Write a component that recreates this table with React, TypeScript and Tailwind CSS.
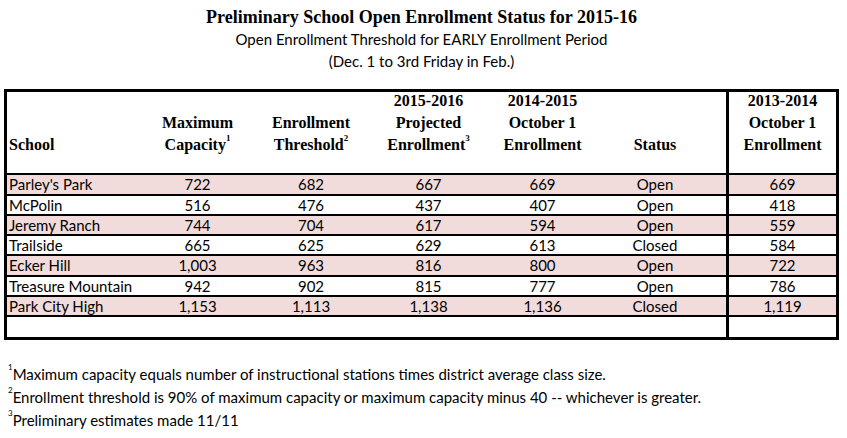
import React from "react";

const rows = [
  ["Parley's Park", "722", "682", "667", "669", "Open", "669"],
  ["McPolin", "516", "476", "437", "407", "Open", "418"],
  ["Jeremy Ranch", "744", "704", "617", "594", "Open", "559"],
  ["Trailside", "665", "625", "629", "613", "Closed", "584"],
  ["Ecker Hill", "1,003", "963", "816", "800", "Open", "722"],
  ["Treasure Mountain", "942", "902", "815", "777", "Open", "786"],
  ["Park City High", "1,153", "1,113", "1,138", "1,136", "Closed", "1,119"],
  ["", "", "", "", "", "", ""],
];

const heights = ["h-[21px]", "h-[20px]", "h-[20px]", "h-[20px]", "h-[21px]", "h-[20px]", "h-[20px]", "h-[20px]"];

const serif = "font-['Liberation_Serif',serif]";
const sans = "font-['Lato',sans-serif]";

function Sup({ n }: { n: string }) {
  return <sup className="relative -top-[3px] text-[9px] align-super leading-none">{n}</sup>;
}

function FSup({ n }: { n: string }) {
  return <sup className="relative -top-[4px] text-[8px] align-super leading-none">{n}</sup>;
}

export default function App() {
  return (
    <div className="w-[847px] h-[438px] bg-white text-black relative overflow-hidden">
      <div className="w-[835px] ml-[4px] flex flex-col items-center">
        <div className={`${serif} font-bold text-[18px] leading-[22px] mt-[6px]`}>
          Preliminary School Open Enrollment Status for 2015-16
        </div>
        <div className={`${sans} text-[15px] leading-[22px]`}>
          Open Enrollment Threshold for EARLY Enrollment Period
        </div>
        <div className={`${sans} text-[15px] leading-[22px]`}>(Dec. 1 to 3rd Friday in Feb.)</div>
      </div>

      <div className="ml-[4px] mt-[17px] w-[835px] border-[3px] border-black flex">
        <div className="w-[719px] flex flex-col">
          <div className={`${serif} font-bold text-[16px] h-[83px] border-b-2 border-black flex items-end pb-[17px]`}>
            <div className="w-[133px] pl-[2px] leading-[22px]">School</div>
            <div className="w-[115px] text-center leading-[22px]">
              <div>Maximum</div>
              <div>Capacity<Sup n="1" /></div>
            </div>
            <div className="w-[112px] text-center leading-[22px]">
              <div>Enrollment</div>
              <div>Threshold<Sup n="2" /></div>
            </div>
            <div className="w-[123px] text-center leading-[22px]">
              <div>2015-2016</div>
              <div>Projected</div>
              <div>Enrollment<Sup n="3" /></div>
            </div>
            <div className="w-[105px] text-center leading-[22px]">
              <div>2014-2015</div>
              <div>October 1</div>
              <div>Enrollment</div>
            </div>
            <div className="w-[120px] text-center leading-[22px]">Status</div>
            <div className="w-[11px]" />
          </div>
          {rows.map((r, i) => (
            <div
              key={i}
              className={`${sans} text-[15px] flex items-center ${heights[i]} ${i < 7 ? "border-b-2 border-black" : ""} ${i % 2 === 0 && i < 7 ? "bg-[#f2dcdb]" : "bg-white"}`}
            >
              <div className="w-[133px] pl-[2px] leading-none">{r[0]}</div>
              <div className="w-[115px] text-center leading-none">{r[1]}</div>
              <div className="w-[112px] text-center leading-none">{r[2]}</div>
              <div className="w-[123px] text-center leading-none">{r[3]}</div>
              <div className="w-[105px] text-center leading-none">{r[4]}</div>
              <div className="w-[120px] text-center leading-none">{r[5]}</div>
              <div className="w-[11px]" />
            </div>
          ))}
        </div>
        <div className="w-[110px] border-l-[3px] border-black flex flex-col">
          <div className={`${serif} font-bold text-[16px] h-[83px] border-b-2 border-black flex flex-col items-center justify-end pb-[17px] leading-[22px]`}>
            <div>2013-2014</div>
            <div>October 1</div>
            <div>Enrollment</div>
          </div>
          {rows.map((r, i) => (
            <div
              key={i}
              className={`${sans} text-[15px] flex items-center justify-center ${heights[i]} leading-none ${i < 7 ? "border-b-2 border-black" : ""} ${i % 2 === 0 && i < 7 ? "bg-[#f2dcdb]" : "bg-white"}`}
            >
              {r[6]}
            </div>
          ))}
        </div>
      </div>

      <div className={`${sans} text-[15px] leading-[23px] mt-[23px] ml-[8px]`}>
        <div><FSup n="1" />Maximum capacity equals number of instructional stations times district average class size.</div>
        <div><FSup n="2" />Enrollment threshold is 90% of maximum capacity or maximum capacity minus 40 -- whichever is greater.</div>
        <div><FSup n="3" />Preliminary estimates made 11/11</div>
      </div>
    </div>
  );
}
